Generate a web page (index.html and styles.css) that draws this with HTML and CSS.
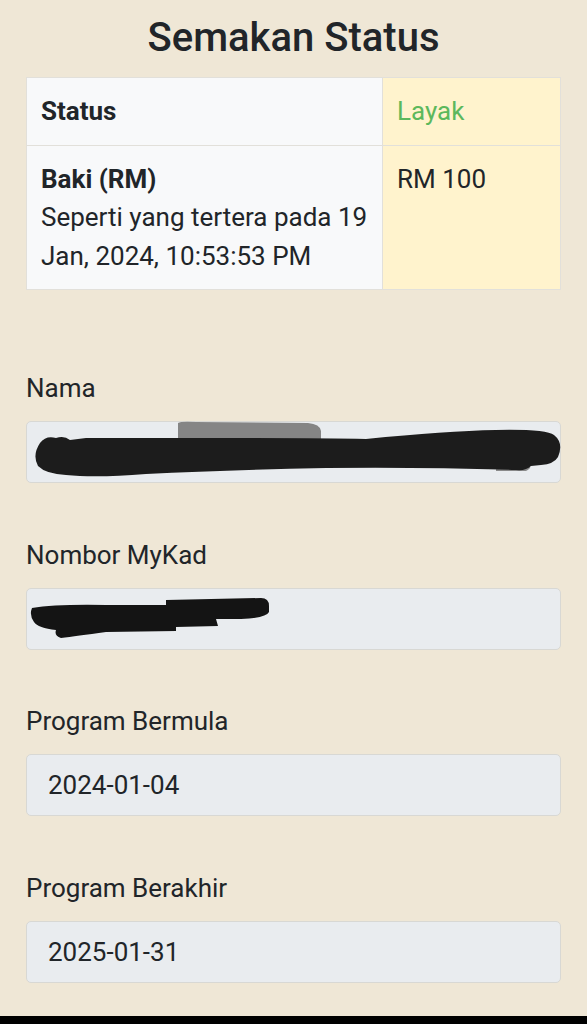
FILE: index.html
```html
<!DOCTYPE html>
<html lang="ms">
<head>
<meta charset="utf-8">
<title>Semakan Status</title>
<link rel="stylesheet" href="styles.css">
</head>
<body>
<main class="page">
  <h1 class="title">Semakan Status</h1>
  <table class="status-table">
    <tr>
      <th class="cell-label">Status</th>
      <td class="cell-value ok">Layak</td>
    </tr>
    <tr>
      <th class="cell-label"><span class="strong">Baki (RM)</span><br><span class="normal">Seperti yang tertera pada 19 Jan, 2024, 10:53:53 PM</span></th>
      <td class="cell-value">RM 100</td>
    </tr>
  </table>

  <section class="fields">
    <div class="field">
      <label class="label">Nama</label>
      <div class="input redacted">
        <span class="value">&nbsp;</span>
        <svg class="scribble" viewBox="0 0 535 62" width="535" height="62" aria-hidden="true">
          <path d="M152 2 Q155 0 170 1 L282 2 Q294 3 295 10 L295 20 L152 20 Z" fill="#858585"/>
          <path d="M470 44 L500 43 Q508 46 500 50 L470 50 Z" fill="#8a8a8a"/>
          <path d="M14 22 Q20 14 30 17 Q38 14 44 19 L60 17 L200 17 Q300 17 340 18 Q420 10 470 9 Q520 8 528 14 Q538 22 532 36 Q528 43 515 44 L505 45 Q500 50 490 49 Q400 46 300 47 Q200 49 120 53 Q70 57 40 54 Q20 53 12 45 Q6 34 14 22 Z" fill="#1c1c1c"/>
        </svg>
      </div>
    </div>
    <div class="field">
      <label class="label">Nombor MyKad</label>
      <div class="input redacted">
        <span class="value">&nbsp;</span>
        <svg class="scribble" viewBox="0 0 535 62" width="535" height="62" aria-hidden="true">
          <path d="M6 20 Q30 16 80 17 L140 17 L140 12 L235 10 Q243 10 243 18 L243 24 Q240 30 215 31 L190 31 L192 38 L150 39 L150 43 L80 44 Q50 48 35 50 Q28 48 30 42 Q12 40 8 34 Q3 27 6 20 Z" fill="#141414"/>
        </svg>
      </div>
    </div>
    <div class="field">
      <label class="label">Program Bermula</label>
      <div class="input"><span class="value">2024-01-04</span></div>
    </div>
    <div class="field">
      <label class="label">Program Berakhir</label>
      <div class="input"><span class="value">2025-01-31</span></div>
    </div>
  </section>
</main>
<div class="navbar"></div>
</body>
</html>
```
FILE: styles.css
```css
html, body {
  margin: 0;
  padding: 0;
}
body {
  background: #efe7d6;
  font-family: Roboto, "Noto Sans", "Liberation Sans", sans-serif;
  color: #212529;
  width: 587px;
  height: 1024px;
  overflow: hidden;
  position: relative;
}
.page {
  padding: 0 26px;
}
.title {
  margin: 0;
  padding-top: 14px;
  height: 77px;
  box-sizing: border-box;
  text-align: center;
  font-size: 40px;
  font-weight: 500;
  line-height: 48px;
  color: #212529;
}
.status-table {
  width: 535px;
  border-collapse: collapse;
  font-size: 26px;
  line-height: 38.5px;
}
.status-table th,
.status-table td {
  border: 1px solid #e2e0da;
  padding: 14px;
  vertical-align: top;
  text-align: left;
}
.cell-label {
  background: #f8f9fa;
  width: 327px;
  font-weight: 700;
}
.cell-label .normal {
  font-weight: 400;
}
.cell-value {
  background: #fff3cd;
  font-weight: 400;
}
.ok {
  color: #5cb85c;
}
.fields {
  display: flex;
  flex-direction: column;
  gap: 55.5px;
  padding-top: 82px;
}
.field {
  display: flex;
  flex-direction: column;
  gap: 17px;
}
.label {
  font-size: 26px;
  line-height: 32px;
  color: #212529;
}
.input {
  position: relative;
  height: 62px;
  box-sizing: border-box;
  background: #e9ecef;
  border: 1.5px solid #d8d8d4;
  border-radius: 5px;
  padding: 0 21px;
  display: flex;
  align-items: center;
  font-size: 26px;
  color: #212529;
}
.scribble {
  position: absolute;
  left: -1px;
  top: -1px;
}
.navbar {
  position: absolute;
  left: 0;
  right: 0;
  bottom: 0;
  height: 8px;
  background: #000;
}
```
